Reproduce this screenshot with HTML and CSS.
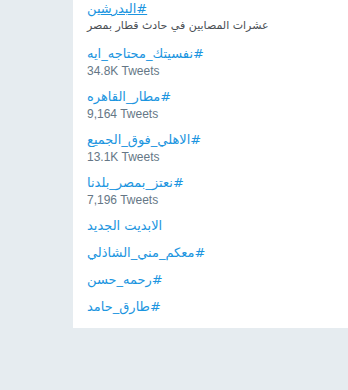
FILE: index.html
```html
<!DOCTYPE html>
<html lang="ar">
<head>
  <meta charset="UTF-8">
  <meta name="viewport" content="width=device-width, initial-scale=1.0">
  <title>Trends</title>
  <link rel="stylesheet" href="styles.css">
</head>
<body>
  <div class="trends">
    <ul class="trend-list">
      <li class="trend-item">
        <a href="#" class="trend-name hover" dir="rtl">#البدرشين</a>
        <div class="trend-desc" dir="rtl">عشرات المصابين في حادث قطار بمصر</div>
      </li>
      <li class="trend-item">
        <a href="#" class="trend-name" dir="rtl">#نفسيتك_محتاجه_ايه</a>
        <div class="trend-count">34.8K Tweets</div>
      </li>
      <li class="trend-item">
        <a href="#" class="trend-name" dir="rtl">#مطار_القاهره</a>
        <div class="trend-count">9,164 Tweets</div>
      </li>
      <li class="trend-item">
        <a href="#" class="trend-name" dir="rtl">#الاهلي_فوق_الجميع</a>
        <div class="trend-count">13.1K Tweets</div>
      </li>
      <li class="trend-item">
        <a href="#" class="trend-name" dir="rtl">#نعتز_بمصر_بلدنا</a>
        <div class="trend-count">7,196 Tweets</div>
      </li>
      <li class="trend-item">
        <a href="#" class="trend-name" dir="rtl">الابديت الجديد</a>
      </li>
      <li class="trend-item">
        <a href="#" class="trend-name" dir="rtl">#معكم_مني_الشاذلي</a>
      </li>
      <li class="trend-item">
        <a href="#" class="trend-name" dir="rtl">#رحمه_حسن</a>
      </li>
      <li class="trend-item">
        <a href="#" class="trend-name" dir="rtl">#طارق_حامد</a>
      </li>
    </ul>
  </div>
</body>
</html>
```

FILE: styles.css
```css
:root {
  --link: #1b95e0;
  --muted: #657786;
  --page: #e6ecf0;
}

body {
  margin: 0;
  background: var(--page);
  font-family: "DejaVu Sans", "Liberation Sans", sans-serif;
}

.trends {
  margin-left: 73px;
  background: white;
  padding: 0 15px 8px 14px;
}

.trend-list {
  list-style: none;
  margin: 0;
  padding: 0;
}

.trend-item {
  padding: 5px 0 4px;
}

.trend-item:first-child {
  padding-top: 0;
}

.trend-name {
  display: block;
  text-align: left;
  color: var(--link);
  font-size: 13px;
  line-height: 18px;
  text-decoration: none;
}

.trend-name.hover {
  text-decoration: underline;
}

.trend-desc {
  text-align: left;
  color: #4a4f55;
  font-size: 11px;
  line-height: 16px;
  padding-bottom: 2px;
}

.trend-count {
  color: var(--muted);
  font-family: "Liberation Sans", sans-serif;
  font-size: 12px;
  line-height: 16px;
}
```
